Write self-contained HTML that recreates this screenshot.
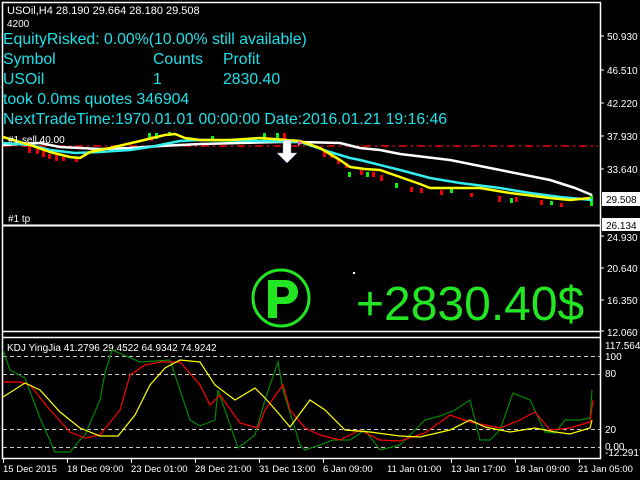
<!DOCTYPE html>
<html><head><meta charset="utf-8"><style>
html,body{margin:0;padding:0;background:#000;width:640px;height:480px;overflow:hidden}
svg{display:block}
text{font-family:"Liberation Sans",sans-serif}
</style></head><body>
<svg width="640" height="480" viewBox="0 0 640 480" xmlns="http://www.w3.org/2000/svg">
<rect width="640" height="480" fill="#000"/>
<g stroke="#fff" stroke-width="1.5" fill="none">
<path d="M2.5 2.5H600.5V458.5H2.5Z"/>
<line x1="2" y1="225.5" x2="600" y2="225.5" stroke-width="2"/>
<line x1="2" y1="331.5" x2="600" y2="331.5"/>
<line x1="2" y1="337.5" x2="600" y2="337.5"/>
</g>
<line x1="3" y1="146" x2="598" y2="146" stroke="#e00" stroke-width="1.5" stroke-dasharray="8,4,2,4"/>
<g fill="#e00">
<rect x="28" y="145" width="3" height="8"/><rect x="36" y="148" width="3" height="6"/><rect x="42" y="150" width="3" height="7"/><rect x="48" y="154" width="3" height="5"/><rect x="55" y="155" width="3" height="6"/><rect x="62" y="157" width="3" height="4"/><rect x="75" y="158" width="3" height="4"/>
<rect x="150" y="136" width="3" height="5"/><rect x="283" y="133" width="3" height="8"/><rect x="323" y="150" width="3" height="7"/><rect x="330" y="153" width="3" height="5"/><rect x="337" y="158" width="3" height="6"/>
<rect x="345" y="163" width="3" height="5"/><rect x="360" y="170" width="3" height="5"/><rect x="372" y="172" width="3" height="5"/><rect x="380" y="175" width="3" height="6"/><rect x="410" y="187" width="3" height="5"/><rect x="420" y="188" width="3" height="5"/><rect x="440" y="190" width="3" height="5"/><rect x="470" y="193" width="3" height="4"/><rect x="498" y="196" width="3" height="6"/><rect x="515" y="197" width="3" height="5"/><rect x="540" y="200" width="3" height="5"/><rect x="560" y="203" width="3" height="4"/>
</g>
<g fill="#1e1">
<rect x="148" y="133" width="3" height="5"/><rect x="155" y="133" width="3" height="6"/><rect x="168" y="132" width="3" height="4"/><rect x="211" y="136" width="3" height="5"/><rect x="263" y="133" width="3" height="7"/><rect x="276" y="133" width="3" height="5"/><rect x="348" y="172" width="3" height="5"/><rect x="366" y="172" width="3" height="5"/><rect x="395" y="183" width="3" height="5"/><rect x="450" y="189" width="3" height="4"/><rect x="510" y="198" width="3" height="5"/><rect x="550" y="201" width="3" height="4"/><rect x="590" y="195" width="3" height="11"/>
</g>
<g fill="none" stroke-width="2.5" stroke-linejoin="round">
<polyline stroke="#fff" points="3,145 40,143 60,147 100,149 130,148 160,146 200,144 240,143 280,142 300,142 340,143 360,148 380,150 400,154 450,160 500,170 550,180 575,188 592,195"/>
<polyline stroke="#3ee" points="3,143 30,145 50,150 75,153 100,152 130,150 150,147 180,141 200,140 260,141 300,142 330,152 350,158 360,160 380,165 400,170 430,178 460,183 500,188 530,193 560,197 592,200"/>
<polyline stroke="#ff0" points="3,137 30,145 50,152 70,157 80,158 90,152 110,148 140,141 165,135 175,134 185,138 200,140 230,140 260,138 300,141 320,148 340,160 350,167 365,169 380,170 400,177 420,184 430,188 450,188 480,188 510,193 550,198 570,200 590,198"/>
</g>
<path d="M283 140V153H277L287 163L297 153H291V140Z" fill="#fff" stroke="#88c" stroke-width="0.5"/>
<path d="M298 140l5 3-5 3z" fill="#f6a"/>
<text x="8" y="143" fill="#fff" font-size="10">#1 sell 40.00</text>
<text x="8" y="222" fill="#fff" font-size="10">#1 tp</text>
<text x="7" y="14" fill="#fff" font-size="11">USOil,H4  28.190 29.664 28.180 29.508</text>
<text x="7" y="27" fill="#fff" font-size="10">4200</text>
<g fill="#1ee0e8" font-size="15.8">
<text x="3" y="44">EquityRisked: 0.00%(10.00% still available)</text>
<text x="3" y="64">Symbol</text><text x="153" y="64">Counts</text><text x="223" y="64">Profit</text>
<text x="3" y="84">USOil</text><text x="153" y="84">1</text><text x="223" y="84">2830.40</text>
<text x="3" y="104">took 0.0ms quotes 346904</text>
<text x="3" y="124">NextTradeTime:1970.01.01 00:00:00 Date:2016.01.21 19:16:46</text>
</g>
<circle cx="281" cy="298" r="28" fill="none" stroke="#22e622" stroke-width="3"/>
<path d="M268 280H286A12 12 0 0 1 286 304H277V318H268Z" fill="#22e622"/>
<path d="M277 287H284A5 5 0 0 1 284 297H277Z" fill="#000"/>
<rect x="353" y="272" width="2" height="2" fill="#fff"/>
<text x="356" y="320" fill="#22e622" font-size="48">+2830.40$</text>
<g stroke="#ccc" stroke-dasharray="4,3" stroke-width="1">
<line x1="3" y1="356.5" x2="600" y2="356.5"/><line x1="3" y1="374.5" x2="600" y2="374.5"/>
<line x1="3" y1="429.5" x2="600" y2="429.5"/><line x1="3" y1="447.5" x2="600" y2="447.5"/>
</g>
<text x="7" y="351" fill="#fff" font-size="10">KDJ YingJia 41.2796 29.4522 64.9342 74.9242</text>
<g fill="none" stroke-width="1.2">
<polyline stroke="#080" points="3,350 10,370 25,378 40,418 55,452 70,452 80,440 85,435 100,400 105,373 112,350 140,362 170,360 190,420 200,426 215,420 218,390 225,410 238,448 255,435 265,400 278,362 283,390 300,445 305,450 320,445 333,440 350,440 365,430 380,450 400,445 410,435 425,420 440,416 455,410 470,400 480,440 490,440 500,430 513,393 530,400 545,432 555,433 565,420 580,420 590,418 592,390"/>
<polyline stroke="#f00" points="3,382 20,382 30,385 50,410 70,432 85,438 100,435 120,410 130,375 145,365 160,362 180,362 200,385 210,405 220,395 240,423 258,428 265,410 283,385 290,410 305,428 320,435 340,440 360,430 380,440 400,441 425,433 450,415 470,422 500,428 520,420 535,412 550,430 570,428 590,422 593,400"/>
<polyline stroke="#ff0" points="3,397 25,383 40,390 60,412 80,428 100,436 118,436 135,415 150,385 165,368 180,360 200,362 215,385 235,400 255,388 265,398 280,415 290,427 310,400 325,410 345,430 370,432 400,436 420,437 450,430 470,420 485,427 510,432 535,428 555,432 570,434 590,428 592,420"/>
</g>
<g stroke="#fff" stroke-width="1">
<line x1="600" y1="36" x2="604" y2="36"/><line x1="600" y1="70" x2="604" y2="70"/><line x1="600" y1="103" x2="604" y2="103"/><line x1="600" y1="136" x2="604" y2="136"/><line x1="600" y1="169" x2="604" y2="169"/><line x1="600" y1="236" x2="604" y2="236"/><line x1="600" y1="268" x2="604" y2="268"/><line x1="600" y1="300" x2="604" y2="300"/><line x1="600" y1="331" x2="604" y2="331"/>
</g>
<g fill="#fff" font-size="10">
<text x="607" y="40">50.930</text><text x="607" y="74">46.510</text><text x="607" y="107">42.220</text><text x="607" y="140">37.930</text><text x="607" y="173">33.640</text>
<text x="607" y="241">24.930</text><text x="607" y="272">20.640</text><text x="607" y="304">16.350</text><text x="607" y="336">12.060</text>
<text x="605" y="349">117.5646</text><text x="605" y="360">100</text><text x="605" y="377">80</text><text x="605" y="433">20</text><text x="605" y="450">0.00</text><text x="605" y="456">-12.2917</text>
</g>
<rect x="602" y="192" width="38" height="14" fill="#fff"/><text x="606" y="203" fill="#000" font-size="10">29.508</text>
<rect x="602" y="218" width="38" height="13" fill="#fff"/><text x="606" y="229" fill="#000" font-size="10">26.134</text>
<g stroke="#fff"><line x1="3.5" y1="458" x2="3.5" y2="463"/><line x1="67.5" y1="458" x2="67.5" y2="463"/><line x1="131.5" y1="458" x2="131.5" y2="463"/><line x1="195.5" y1="458" x2="195.5" y2="463"/><line x1="259.5" y1="458" x2="259.5" y2="463"/><line x1="323.5" y1="458" x2="323.5" y2="463"/><line x1="451.5" y1="458" x2="451.5" y2="463"/><line x1="515.5" y1="458" x2="515.5" y2="463"/><line x1="579.5" y1="458" x2="579.5" y2="463"/></g>
<g fill="#fff" font-size="9.5">
<text x="3" y="472">15 Dec 2015</text><text x="67" y="472">18 Dec 09:00</text><text x="131" y="472">23 Dec 01:00</text><text x="195" y="472">28 Dec 21:00</text><text x="259" y="472">31 Dec 13:00</text><text x="323" y="472">6 Jan 09:00</text><text x="387" y="472">11 Jan 01:00</text><text x="451" y="472">13 Jan 17:00</text><text x="515" y="472">18 Jan 09:00</text><text x="578" y="472">21 Jan 05:00</text>
</g>
</svg>
</body></html>
